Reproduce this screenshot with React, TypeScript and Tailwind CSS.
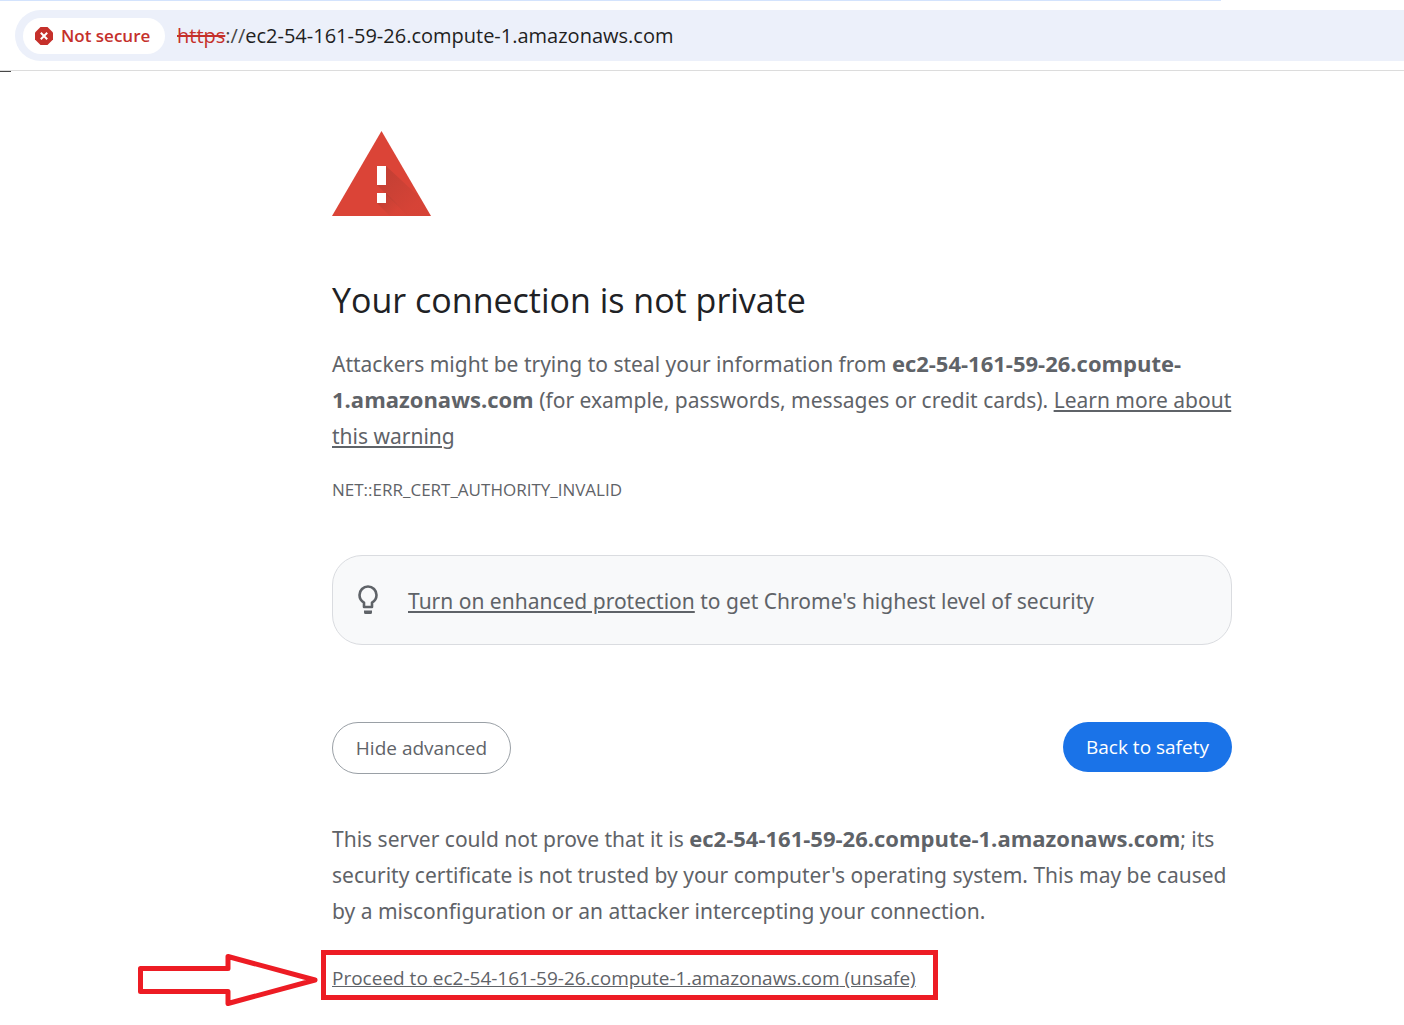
const HOST = 'ec2-54-161-59-26.compute-1.amazonaws.com';

function AddressBar() {
  return (
    <header className="border-b border-[#dcdcdc] h-[71px]">
      <div className="h-px w-[87%] bg-[#d3e3fd]"></div>
      <div className="mt-[9px] ml-[15px] h-[51px] rounded-l-full bg-[#ecf0fa] flex items-center pl-2">
        <button className="h-9 w-[142px] shrink-0 rounded-full bg-white flex items-center gap-2 pl-3 text-[17px] font-semibold text-[#c5302b] whitespace-nowrap">
          <svg className="size-[18px] shrink-0" viewBox="0 0 18 18" aria-hidden="true">
            <path d="M5.5 0h7L18 5.5v7L12.5 18h-7L0 12.5v-7z" fill="#c5302b" />
            <path d="M5.8 5.8l6.4 6.4M12.2 5.8l-6.4 6.4" stroke="#fff" strokeWidth="2" />
          </svg>
          Not secure
        </button>
        <label htmlFor="address" className="ml-3 text-xl text-[#474747] whitespace-nowrap">
          <span className="text-[#c5302b] line-through">https</span>://
        </label>
        <input
          id="address"
          className="flex-1 min-w-0 bg-transparent p-0 text-xl text-[#1f1f1f] outline-none"
          type="text"
          defaultValue={HOST}
        />
      </div>
    </header>
  );
}

function WarningIcon() {
  return (
    <svg className="w-[99px] h-[85px]" viewBox="0 0 99 85" aria-hidden="true">
      <defs>
        <linearGradient id="shade" x1="50" y1="40" x2="84" y2="74" gradientUnits="userSpaceOnUse">
          <stop offset="0" stopColor="#3e2723" stopOpacity="0.16" />
          <stop offset="1" stopColor="#3e2723" stopOpacity="0.03" />
        </linearGradient>
        <linearGradient id="shadeLow" x1="48" y1="68" x2="62" y2="82" gradientUnits="userSpaceOnUse">
          <stop offset="0" stopColor="#3e2723" stopOpacity="0.16" />
          <stop offset="1" stopColor="#3e2723" stopOpacity="0.02" />
        </linearGradient>
      </defs>
      <path d="M49.500 0L99 85H0z" fill="#db4437" />
      <path d="M54 35L88.500 67 99 85H76L45 54h9z" fill="url(#shade)" />
      <path d="M54 62l23 23H58L45 72h9z" fill="url(#shadeLow)" />
      <path d="M45 35h9v19h-9zM45 62h9v10h-9z" fill="#fff" />
    </svg>
  );
}

function Bulb() {
  return (
    <svg className="w-5 h-[30px] shrink-0" viewBox="0 0 20 30" fill="none" aria-hidden="true">
      <path
        d="M6 22V17.600C3.300 16 1.500 13.300 1.500 10a8.500 8.500 0 0 1 17 0c0 3.300-1.800 6-4.500 7.600V22z"
        stroke="#5f6368"
        strokeWidth="2.600"
        strokeLinejoin="round"
      />
      <path d="M6 25.500h8v2a1.500 1.500 0 0 1-1.500 1.500h-5A1.500 1.500 0 0 1 6 27.500z" fill="#5f6368" />
    </svg>
  );
}

function Host() {
  return <strong className="font-['Open_Sans',sans-serif] text-[22px] leading-none">{HOST}</strong>;
}

export default function App() {
  return (
    <div className="min-h-screen bg-white font-['Open_Sans','Noto_Sans',sans-serif] text-[#5f6368]">
      <AddressBar />
      <div className="h-px w-[11px] bg-[#474747]"></div>
      <main className="ml-[332px] mr-6 max-w-[900px] pt-[59px] pb-8">
        <WarningIcon />
        <h1 className="mt-[60px] text-[34px] leading-[48px] text-[#202124]">Your connection is not private</h1>
        <p className="mt-[22px] font-['Noto_Sans','Open_Sans',sans-serif] text-[21px] leading-9">
          Attackers might be trying to steal your information from <Host /> (for example, passwords, messages or credit
          cards).{' '}
          <a href="#learn" className="underline">
            Learn more about this warning
          </a>
        </p>
        <div className="mt-[22px] text-[17px] leading-7">NET::ERR_CERT_AUTHORITY_INVALID</div>

        <div className="mt-[51px] h-[90px] rounded-[30px] border border-[#dadce0] bg-[#f8f9fa] flex items-center gap-[30px] pl-[25px] font-['Noto_Sans','Open_Sans',sans-serif] text-[21px]">
          <Bulb />
          <p className="leading-9 pt-0.5">
            <a href="#protection" className="underline">
              Turn on enhanced protection
            </a>{' '}
            to get Chrome's highest level of security
          </p>
        </div>

        <div className="mt-[77px] flex items-start justify-between text-[19px]">
          <button className="h-[52px] w-[179px] rounded-full border border-[#9aa0a6]">Hide advanced</button>
          <button className="h-[50px] w-[169px] rounded-full bg-[#1a73e8] text-white">Back to safety</button>
        </div>

        <p className="mt-[47px] font-['Noto_Sans','Open_Sans',sans-serif] text-[21px] leading-9">
          This server could not prove that it is <Host />; its security certificate is not trusted by your computer's
          operating system. This may be caused by a misconfiguration or an attacker intercepting your connection.
        </p>

        <div className="relative mt-[33px] text-[19px] leading-8">
          <a href="#proceed" className="underline whitespace-nowrap">
            Proceed to {HOST} (unsafe)
          </a>
          {/* Highlight and arrow drawn over the page */}
          <div className="pointer-events-none absolute -top-3 -left-[11px] h-[50px] w-[617px] border-5 border-[#ed1c24]"></div>
          <svg
            className="pointer-events-none absolute -top-2 -left-[194px] w-[180px] h-[52px]"
            viewBox="0 0 180 52"
            fill="none"
            aria-hidden="true"
          >
            <path
              d="M2.500 14.500H90V2.500L177 26L90 49.500V37.500H2.500z"
              stroke="#ed1c24"
              strokeWidth="5"
              strokeLinejoin="round"
            />
          </svg>
        </div>
      </main>
    </div>
  );
}
